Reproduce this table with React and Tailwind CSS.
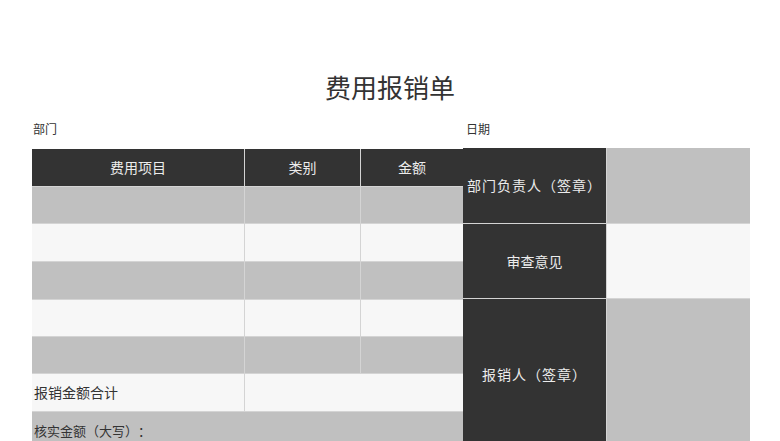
import React from "react";

const font = { fontFamily: '"Noto Sans CJK SC", "Noto Sans", sans-serif' };

function Dark({ children, className = "" }) {
  return (
    <div className={`bg-[#333333] text-[#ececec] text-[14px] flex items-center justify-center ${className}`}>
      {children}
    </div>
  );
}

export default function App() {
  const gray = "bg-[#c0c0c0]";
  const white = "bg-[#f7f7f7]";
  return (
    <div className="w-[780px] h-[441px] overflow-hidden bg-white text-[#333333] [text-spacing-trim:space-all]" style={font}>
      <div className="mt-[72px] h-[30px] leading-[30px] text-[26px] text-center text-[#333333]">费用报销单</div>
      <div className="mt-[18px] h-[18px] flex pl-[33px] text-[12px] leading-[18px]">
        <div className="w-[430px]">部门</div>
        <div className="pl-[3px]">日期</div>
      </div>
      <div className="mt-[10px] flex pl-[32px] items-start">
        <div className="mt-px w-[431px] grid grid-cols-[212px_115px_102px] grid-rows-[37px_36px_37px_37px_36px_36px_37px_40px] gap-px bg-[#d4d4d4]">
          <Dark>费用项目</Dark>
          <Dark>类别</Dark>
          <Dark>金额</Dark>
          <div className={gray} />
          <div className={gray} />
          <div className={gray} />
          <div className={white} />
          <div className={white} />
          <div className={white} />
          <div className={gray} />
          <div className={gray} />
          <div className={gray} />
          <div className={white} />
          <div className={white} />
          <div className={white} />
          <div className={gray} />
          <div className={gray} />
          <div className={gray} />
          <div className={`${white} flex items-center pl-[2px] text-[14px]`}>报销金额合计</div>
          <div className={`${white} col-span-2`} />
          <div className={`${gray} col-span-3 flex items-start pt-[9px] pl-[2px] text-[13px] leading-[20px]`}>核实金额（大写）：</div>
        </div>
        <div className="w-[287px] grid grid-cols-[143px_143px] grid-rows-[75px_74px_160px] gap-px bg-[#d4d4d4]">
          <Dark className="tracking-[1px]">部门负责人（签章）</Dark>
          <div className={gray} />
          <Dark>审查意见</Dark>
          <div className={white} />
          <Dark className="items-start pt-[65px] tracking-[1px]">报销人（签章）</Dark>
          <div className={gray} />
        </div>
      </div>
    </div>
  );
}
